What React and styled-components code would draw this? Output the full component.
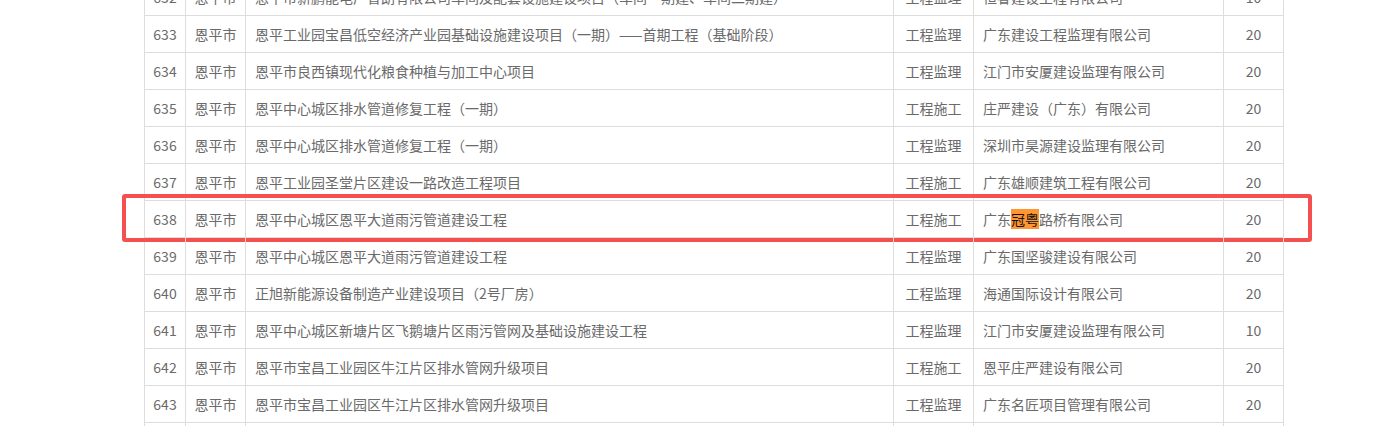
import React from "react";
import styled, { createGlobalStyle } from "styled-components";

const GlobalStyle = createGlobalStyle`
  html, body {
    margin: 0;
    padding: 0;
    background: #ffffff;
    overflow: hidden;
  }
  body {
    font-family: "Noto Sans CJK SC", "Noto Sans", sans-serif;
  }
`;

const Viewport = styled.div`
  height: 426px;
  overflow: hidden;
`;

const Page = styled.div`
  padding-left: 144px;
  margin-top: -21px;
`;

const Table = styled.div`
  width: 1140px;
  box-sizing: border-box;
  border-left: 1px solid #dddddd;
  display: flex;
  flex-direction: column;
`;

const Row = styled.div`
  position: relative;
  display: grid;
  grid-template-columns: 41px 60px 648px 80px 250px 60px;
  height: 37px;
  box-sizing: border-box;
  border-bottom: 1px solid #dddddd;
`;

const Cell = styled.div`
  box-sizing: border-box;
  border-right: 1px solid #dddddd;
  display: flex;
  align-items: center;
  justify-content: ${(p) => (p.$align === "left" ? "flex-start" : "center")};
  padding: ${(p) => (p.$align === "left" ? "0 9px" : "0")};
  font-size: 14px;
  color: #6a6a6a;
  white-space: nowrap;
  overflow: hidden;
`;

const Mark = styled.span`
  background: #ff9632;
  color: #111111;
`;

const Annotation = styled.div`
  position: absolute;
  left: -23px;
  top: -7px;
  width: 1190px;
  height: 48px;
  box-sizing: border-box;
  border: 4px solid #f5504f;
  border-radius: 3px;
  pointer-events: none;
`;

const rows = [
  ["632", "恩平市", "恩平市新鹏能电厂智朗有限公司车间及配套设施建设项目（车间一期建、车间二期建）", "工程监理", "恒睿建设工程有限公司", "10"],
  ["633", "恩平市", "恩平工业园宝昌低空经济产业园基础设施建设项目（一期）——首期工程（基础阶段）", "工程监理", "广东建设工程监理有限公司", "20"],
  ["634", "恩平市", "恩平市良西镇现代化粮食种植与加工中心项目", "工程监理", "江门市安厦建设监理有限公司", "20"],
  ["635", "恩平市", "恩平中心城区排水管道修复工程（一期）", "工程施工", "庄严建设（广东）有限公司", "20"],
  ["636", "恩平市", "恩平中心城区排水管道修复工程（一期）", "工程监理", "深圳市昊源建设监理有限公司", "20"],
  ["637", "恩平市", "恩平工业园圣堂片区建设一路改造工程项目", "工程施工", "广东雄顺建筑工程有限公司", "20"],
  ["638", "恩平市", "恩平中心城区恩平大道雨污管道建设工程", "工程施工", "__HL__", "20"],
  ["639", "恩平市", "恩平中心城区恩平大道雨污管道建设工程", "工程监理", "广东国坚骏建设有限公司", "20"],
  ["640", "恩平市", "正旭新能源设备制造产业建设项目（2号厂房）", "工程监理", "海通国际设计有限公司", "20"],
  ["641", "恩平市", "恩平中心城区新塘片区飞鹅塘片区雨污管网及基础设施建设工程", "工程监理", "江门市安厦建设监理有限公司", "10"],
  ["642", "恩平市", "恩平市宝昌工业园区牛江片区排水管网升级项目", "工程施工", "恩平庄严建设有限公司", "20"],
  ["643", "恩平市", "恩平市宝昌工业园区牛江片区排水管网升级项目", "工程监理", "广东名匠项目管理有限公司", "20"],
  ["644", "恩平市", "恩平市宝昌工业园区牛江片区排水管网升级项目", "工程施工", "恩平庄严建设有限公司", "20"],
];

function Company({ value }) {
  if (value !== "__HL__") return value;
  return (
    <>
      广东<Mark>冠粤</Mark>路桥有限公司
    </>
  );
}

export default function App() {
  return (
    <>
      <GlobalStyle />
      <Viewport>
        <Page>
          <Table>
            {rows.map((r) => (
              <Row key={r[0]}>
                <Cell>{r[0]}</Cell>
                <Cell>{r[1]}</Cell>
                <Cell $align="left">{r[2]}</Cell>
                <Cell>{r[3]}</Cell>
                <Cell $align="left">
                  <Company value={r[4]} />
                </Cell>
                <Cell>{r[5]}</Cell>
                {r[0] === "638" && <Annotation />}
              </Row>
            ))}
          </Table>
        </Page>
      </Viewport>
    </>
  );
}
